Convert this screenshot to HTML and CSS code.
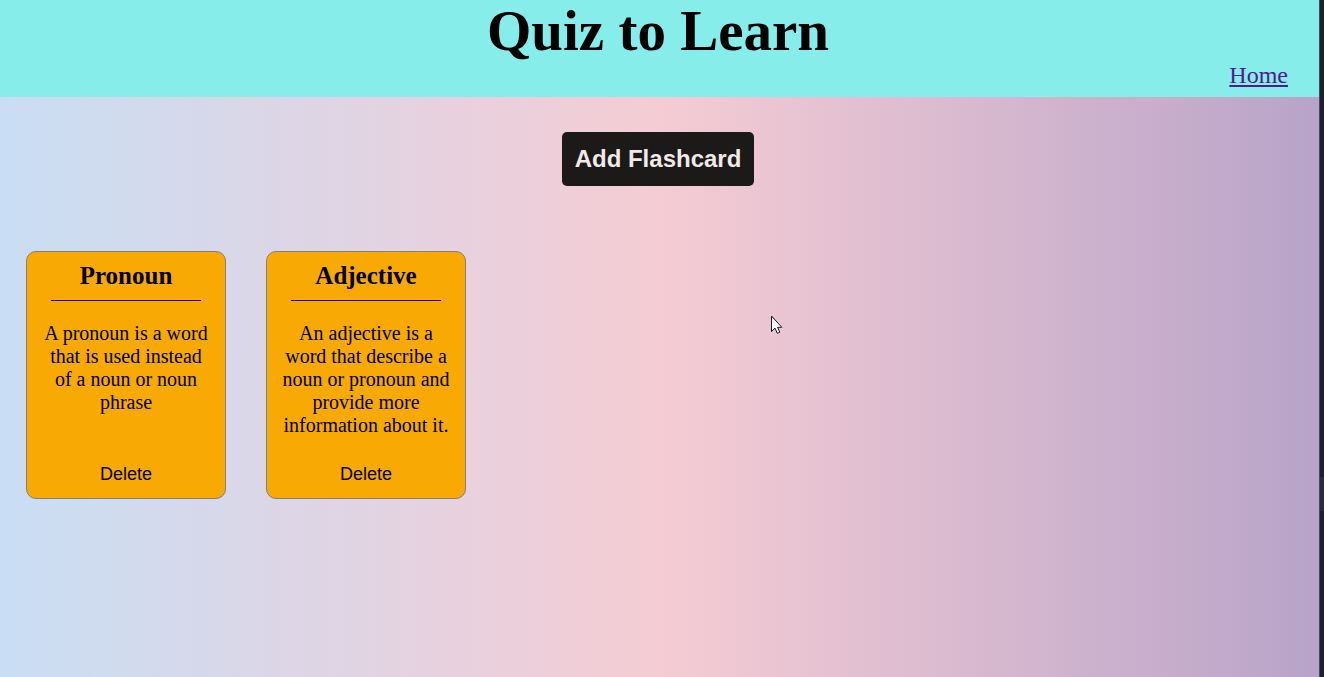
FILE: index.html
```html
<!DOCTYPE html>
<html lang="en">
<head>
<meta charset="utf-8">
<title>Quiz to Learn</title>
<link rel="stylesheet" href="styles.css">
</head>
<body>
<div class="page">
  <header class="header">
    <h1 class="title">Quiz to Learn</h1>
    <nav class="nav"><a class="home" href="#">Home</a></nav>
  </header>
  <main class="main">
    <button class="add" type="button">Add Flashcard</button>
    <section class="cards">
      <article class="card">
        <h2 class="term">Pronoun</h2>
        <p class="meaning">A pronoun is a word that is used instead of a noun or noun phrase</p>
        <button class="delete" type="button">Delete</button>
      </article>
      <article class="card">
        <h2 class="term">Adjective</h2>
        <p class="meaning">An adjective is a word that describe a noun or pronoun and provide more information about it.</p>
        <button class="delete" type="button">Delete</button>
      </article>
    </section>
  </main>
</div>
<div class="rail"><div class="thumb"></div></div>
<svg class="cursor" width="13" height="20" viewBox="0 0 13 20" aria-hidden="true">
  <path d="M1.5 1v15.5l3.5-3.4 2.3 5.2 2.5-1.1-2.2-4.9h4.2z" fill="#fff" stroke="#1c1820" stroke-width="1"/>
</svg>
</body>
</html>
```

FILE: styles.css
```css
* {
  box-sizing: border-box;
  margin: 0;
  padding: 0;
}

body {
  display: flex;
  min-height: 100vh;
  font-family: "Liberation Serif", "Times New Roman", serif;
  color: #000;
}

.page {
  flex: 1;
  background: linear-gradient(to right, #c9def4, #f5ccd4, #b8a4c9);
}

.header {
  padding: 0 31px 8px;
  background: #86edea;
}

.title {
  padding-right: 3px;
  font-size: 57px;
  line-height: 61px;
  text-align: center;
}

.nav {
  display: flex;
  justify-content: flex-end;
  font-size: 24px;
  line-height: 28px;
}

.home {
  color: #551a8b;
}

.main {
  display: flex;
  flex-direction: column;
  align-items: center;
  padding: 35px 29px 35px 26px;
}

.add {
  height: 54px;
  padding: 0 13px;
  border: 0;
  border-radius: 5px;
  background: #1b1a18;
  color: #f4e9e9;
  font: bold 24px "Liberation Sans", Arial, sans-serif;
}

.cards {
  display: flex;
  flex-wrap: wrap;
  align-self: stretch;
  gap: 40px;
  margin-top: 65px;
}

.card {
  display: flex;
  flex-direction: column;
  align-items: center;
  width: 200px;
  padding: 10px 15px 13px;
  border: 1px solid #808080;
  border-radius: 10px;
  background: #f9a903;
  text-align: center;
}

.term {
  width: 150px;
  padding-bottom: 10px;
  border-bottom: 1px solid #111;
  font-size: 25px;
  line-height: 28px;
}

.meaning {
  margin: 21px 0 27px;
  font-size: 20px;
  line-height: 23px;
}

.delete {
  margin-top: auto;
  border: 0;
  background: none;
  font: 18px/21px "Liberation Sans", Arial, sans-serif;
  color: #000;
}

.rail {
  display: flex;
  flex-direction: column;
  justify-content: flex-end;
  width: 5px;
  padding-bottom: 166px;
  border-left: 1px solid #474858;
  background: #1d212c;
}

.thumb {
  height: 34px;
  background: #292d38;
}

.cursor {
  position: absolute;
  left: 770px;
  top: 315px;
}
```
